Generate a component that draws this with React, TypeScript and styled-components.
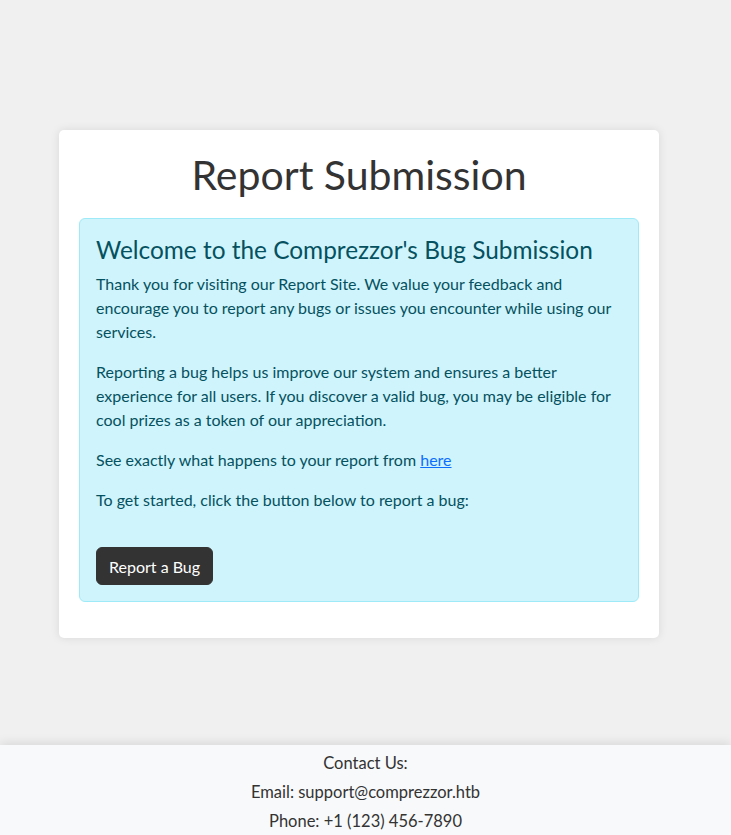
import React from "react";
import styled, { createGlobalStyle } from "styled-components";

const Global = createGlobalStyle`
  * { box-sizing: border-box; }
  html, body { margin: 0; padding: 0; }
  body {
    background: #f0f0f0;
    font-family: Lato, "Open Sans", sans-serif;
    color: #333;
    font-size: 16px;
    line-height: 1.5;
  }
`;

const Page = styled.div`
  display: flex;
  flex-direction: column;
  height: 835px;
  overflow: hidden;
`;

const Card = styled.main`
  width: 600px;
  margin: 130px 0 0 59px;
  background: #fff;
  border-radius: 5px;
  box-shadow: 0 0 10px rgba(0, 0, 0, 0.1);
  padding: 20px;
`;

const Title = styled.h1`
  margin: 0 0 20px;
  font-size: 41px;
  font-weight: 400;
  line-height: 48px;
  text-align: center;
  color: #333;
  transform: translateY(1px);
`;

const Alert = styled.section`
  background: #cff4fc;
  border: 1px solid #9eeaf9;
  border-radius: 6px;
  color: #055160;
  padding: 16px;
  margin-bottom: 16px;
`;

const AlertHeading = styled.h4`
  margin: 0 0 8px;
  font-size: 24.4px;
  font-weight: 400;
  line-height: 29px;
`;

const Para = styled.p`
  margin: 0 0 16px;
`;

const Link = styled.a`
  color: #0d6efd;
  text-decoration: underline;
`;

const Button = styled.button`
  display: block;
  margin-top: 35px;
  height: 38px;
  padding: 0 12px;
  background: #333;
  color: #fff;
  border: 1px solid #333;
  border-radius: 6px;
  font-family: inherit;
  font-size: 16px;
`;

const Footer = styled.footer`
  margin-top: auto;
  height: 90px;
  background: #f8f9fa;
  box-shadow: 0 -2px 10px rgba(0, 0, 0, 0.1);
  padding-top: 6px;
  text-align: center;
  color: #333;
`;

const FooterLine = styled.p`
  margin: 0 0 5px;
  line-height: 24px;
  font-size: 16.5px;
`;

export default function App() {
  return (
    <Page>
      <Global />
      <Card>
        <Title>Report Submission</Title>
        <Alert>
          <AlertHeading>Welcome to the Comprezzor's Bug Submission</AlertHeading>
          <Para>
            Thank you for visiting our Report Site. We value your feedback and encourage you to report any bugs or issues you encounter while using our services.
          </Para>
          <Para>
            Reporting a bug helps us improve our system and ensures a better experience for all users. If you discover a valid bug, you may be eligible for cool prizes as a token of our appreciation.
          </Para>
          <Para>
            See exactly what happens to your report from <Link href="#">here</Link>
          </Para>
          <Para>To get started, click the button below to report a bug:</Para>
          <Button>Report a Bug</Button>
        </Alert>
      </Card>
      <Footer>
        <FooterLine>Contact Us:</FooterLine>
        <FooterLine>Email: support@comprezzor.htb</FooterLine>
        <FooterLine>Phone: +1 (123) 456-7890</FooterLine>
      </Footer>
    </Page>
  );
}
